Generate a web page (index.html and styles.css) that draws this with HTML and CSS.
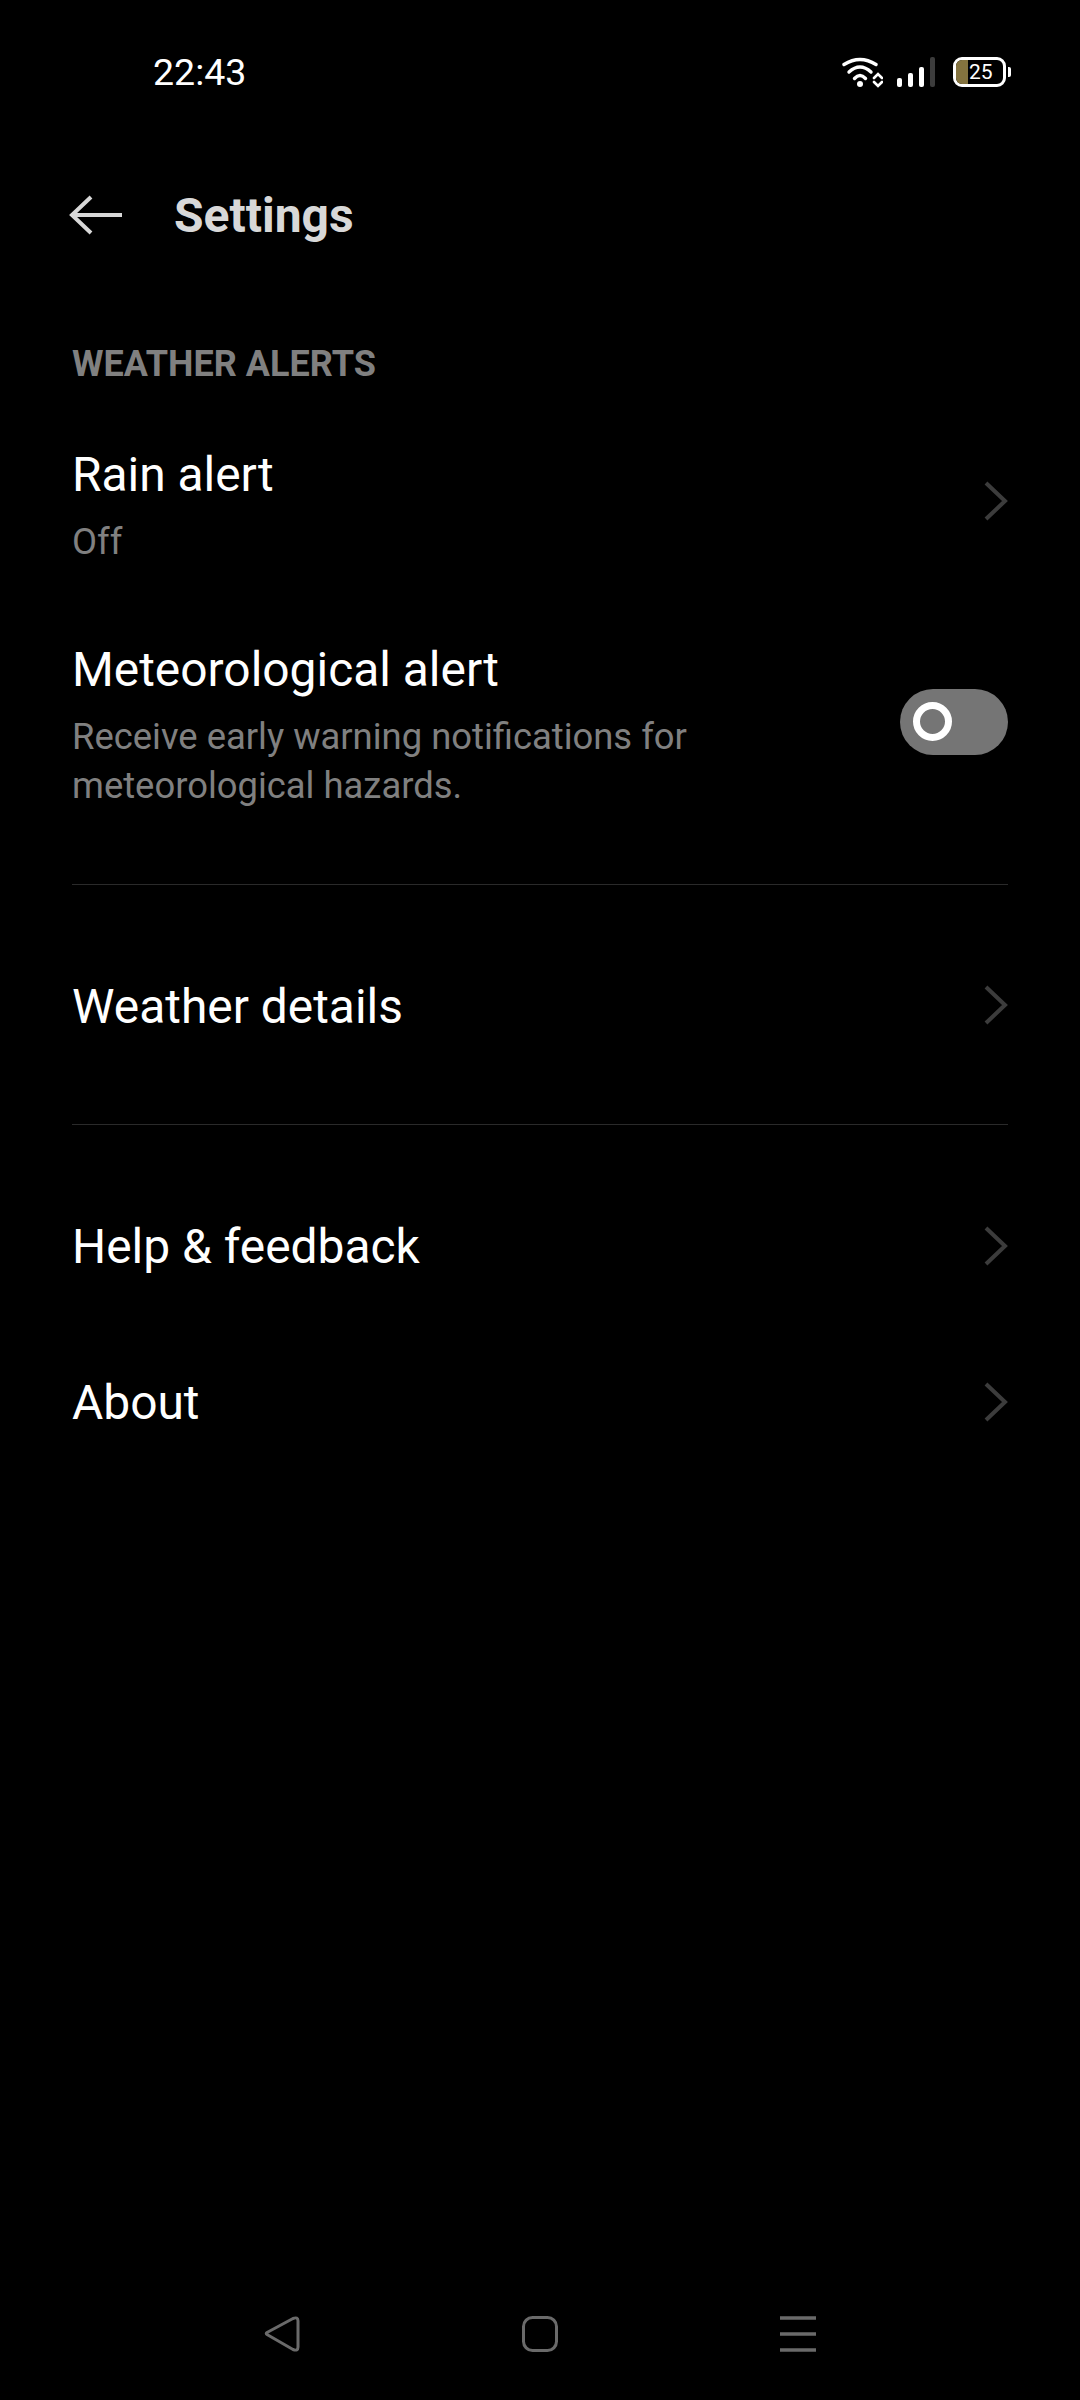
FILE: index.html
```html
<!DOCTYPE html>
<html lang="en">
<head>
  <meta charset="UTF-8" />
  <meta name="viewport" content="width=device-width, initial-scale=1.0"/>
  <title>Settings</title>
  <link rel="stylesheet" href="styles.css">
</head>
<body>
  <div class="status-bar">
    <span class="clock">22:43</span>
    <div class="status-icons">
      <svg class="wifi" width="41" height="31" viewBox="0 0 41 31" fill="none" stroke="#fff" stroke-linecap="round">
        <path d="M2 7.500Q18-2.500 34 7.500" stroke-width="3.400"/>
        <path d="M7 15Q18 5 29 15" stroke-width="3.400"/>
        <path d="M12.500 21.500Q18 15.500 23.500 21.500" stroke-width="3.400"/>
        <circle cx="18" cy="27" r="3" fill="#fff" stroke="none"/>
        <path d="M32 21l4-4 4 4M32 25l4 4 4-4" stroke-width="2.600"/>
      </svg>
      <svg class="signal" width="38" height="30" viewBox="0 0 38 30">
        <rect x="0" y="21" width="5" height="9" rx="2" fill="#fff"/>
        <rect x="11" y="16" width="5" height="14" rx="2" fill="#fff"/>
        <rect x="22" y="10" width="5" height="20" rx="2" fill="#fff"/>
        <rect x="33" y="0" width="5" height="30" rx="2" fill="#3c3c3c"/>
      </svg>
      <div class="battery">
        <div class="battery-body">
          <div class="battery-fill"></div>
          <span class="battery-level">25</span>
        </div>
        <div class="battery-tip"></div>
      </div>
    </div>
  </div>

  <header class="toolbar">
    <svg class="back" width="54" height="40" viewBox="0 0 54 40" fill="none" stroke="#d8d8d8" stroke-width="4">
      <path d="M53 20H3M22 2L3 20l19 18"/>
    </svg>
    <h1>Settings</h1>
  </header>

  <main class="content">
    <h2 class="section-title">WEATHER ALERTS</h2>

    <div class="row">
      <div class="row-text">
        <div class="row-title">Rain alert</div>
        <div class="row-sub">Off</div>
      </div>
      <svg class="chevron chevron-raised" width="24" height="40" viewBox="0 0 24 40" fill="none" stroke="#3c3c3c" stroke-width="4"><path d="M2 2l19 18L2 38"/></svg>
    </div>

    <div class="row">
      <div class="row-text">
        <div class="row-title">Meteorological alert</div>
        <div class="row-sub">Receive early warning notifications for<br>meteorological hazards.</div>
      </div>
      <div class="toggle"><div class="toggle-knob"></div></div>
    </div>

    <div class="divider"></div>

    <div class="row row-details">
      <div class="row-title">Weather details</div>
      <svg class="chevron" width="24" height="40" viewBox="0 0 24 40" fill="none" stroke="#3c3c3c" stroke-width="4"><path d="M2 2l19 18L2 38"/></svg>
    </div>

    <div class="divider divider-tight"></div>

    <div class="row row-link">
      <div class="row-title">Help &amp; feedback</div>
      <svg class="chevron" width="24" height="40" viewBox="0 0 24 40" fill="none" stroke="#3c3c3c" stroke-width="4"><path d="M2 2l19 18L2 38"/></svg>
    </div>

    <div class="row row-link">
      <div class="row-title">About</div>
      <svg class="chevron" width="24" height="40" viewBox="0 0 24 40" fill="none" stroke="#3c3c3c" stroke-width="4"><path d="M2 2l19 18L2 38"/></svg>
    </div>
  </main>

  <nav class="nav-bar">
    <svg width="36" height="36" viewBox="0 0 36 36" fill="none" stroke="#6a6a6a" stroke-width="3" stroke-linejoin="round"><path d="M3 18.500Q1.500 17.500 3 16.500L29 2.500Q34 0.500 34 5V31Q34 35.500 29 33.500Z"/></svg>
    <svg width="36" height="36" viewBox="0 0 36 36" fill="none" stroke="#6a6a6a" stroke-width="3"><rect x="1.500" y="1.500" width="33" height="33" rx="9"/></svg>
    <svg width="36" height="36" viewBox="0 0 36 36" fill="none" stroke="#6a6a6a" stroke-width="3.500"><path d="M0 2h36M0 18h36M0 34h36"/></svg>
  </nav>
</body>
</html>
```

FILE: styles.css
```css
* {
  box-sizing: border-box;
}
html, body {
  margin: 0;
  padding: 0;
}
body {
  width: 1080px;
  height: 2400px;
  background-color: #000;
  color: #fff;
  font-family: Roboto, "Liberation Sans", sans-serif;
  display: flex;
  flex-direction: column;
}
.status-bar {
  height: 144px;
  padding: 50px 69px 0 153px;
  display: flex;
  justify-content: space-between;
  align-items: flex-start;
}
.clock {
  font-size: 37.500px;
  font-weight: 400;
  line-height: 44px;
}
.status-icons {
  display: flex;
  align-items: flex-start;
  margin-top: 7px;
}
.wifi {
  margin-right: 14px;
}
.signal {
  margin-right: 18px;
}
.battery {
  display: flex;
  align-items: center;
  height: 30px;
}
.battery-body {
  position: relative;
  width: 53px;
  height: 30px;
  border: 3px solid #fff;
  border-radius: 9px;
  overflow: hidden;
}
.battery-fill {
  width: 12px;
  height: 100%;
  background-color: #84733f;
}
.battery-level {
  position: absolute;
  left: 13px;
  top: 0;
  font-size: 21px;
  font-weight: 400;
  line-height: 24px;
}
.battery-tip {
  width: 3px;
  height: 10px;
  margin-left: 2px;
  background-color: #fff;
  border-radius: 0 2px 2px 0;
}
.toolbar {
  height: 142px;
  padding-left: 69px;
  display: flex;
  align-items: center;
}
.toolbar h1 {
  margin: 0 0 0 51px;
  font-size: 48px;
  font-weight: 700;
  color: #d8d8d8;
}
.content {
  flex: 1;
  padding: 0 72px;
}
.section-title {
  margin: 0 0 25px;
  padding-top: 58px;
  font-size: 36px;
  font-weight: 700;
  line-height: 40px;
  color: #808080;
}
.row {
  display: flex;
  justify-content: space-between;
  align-items: center;
}
.row-text {
  padding: 38px 0;
}
.row-title {
  font-size: 47.900px;
  line-height: 56px;
}
.row-sub {
  margin-top: 14px;
  font-size: 36.400px;
  line-height: 49px;
  color: #808080;
}
.row-details {
  height: 239px;
}
.row-details .row-title {
  padding-top: 4px;
}
.row-link {
  height: 156px;
}
.row-link .row-title {
  padding-top: 2px;
}
.chevron {
  display: block;
  flex-shrink: 0;
}
.chevron-raised {
  margin-bottom: 11px;
}
.toggle {
  width: 108px;
  height: 66px;
  margin-bottom: 8px;
  padding: 13px 0 0 13px;
  background-color: #757575;
  border-radius: 33px;
}
.toggle-knob {
  width: 39px;
  height: 39px;
  border: 7px solid #fff;
  border-radius: 50%;
}
.divider {
  height: 1px;
  margin-top: 36px;
  background-color: #2a2a2a;
}
.divider-tight {
  margin-top: 0;
  margin-bottom: 43px;
}
.nav-bar {
  height: 132px;
  padding: 0 264px;
  display: flex;
  justify-content: space-between;
  align-items: center;
}
```
